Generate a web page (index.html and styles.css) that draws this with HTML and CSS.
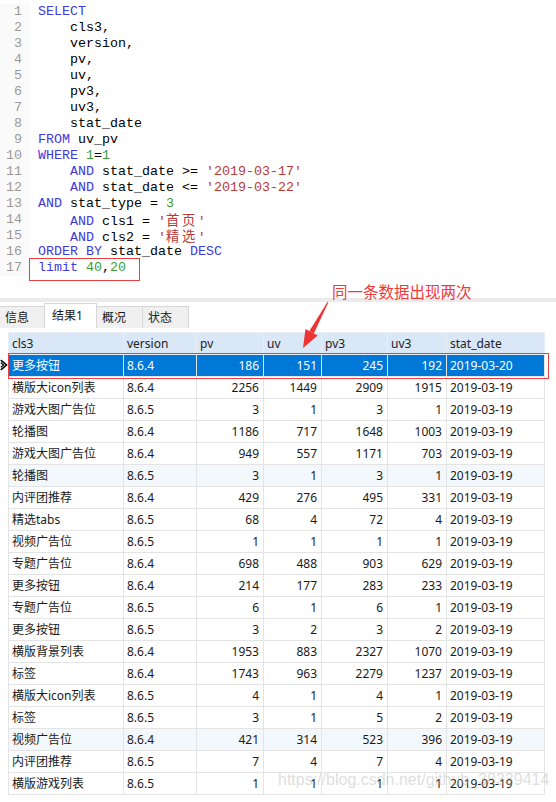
FILE: index.html
```html
<!DOCTYPE html>
<html lang="zh">
<head>
<meta charset="utf-8">
<title>Query result</title>
<link rel="stylesheet" href="styles.css">
</head>
<body>
<div class="page">
  <div class="editor">
    <div class="gutter"><div>1</div><div>2</div><div>3</div><div>4</div><div>5</div><div>6</div><div>7</div><div>8</div><div>9</div><div>10</div><div>11</div><div>12</div><div>13</div><div>14</div><div>15</div><div>16</div><div>17</div></div>
    <div class="code">
      <div class="line"><span class="kw">SELECT</span></div>
      <div class="line">    cls3,</div>
      <div class="line">    version,</div>
      <div class="line">    pv,</div>
      <div class="line">    uv,</div>
      <div class="line">    pv3,</div>
      <div class="line">    uv3,</div>
      <div class="line">    stat_date</div>
      <div class="line"><span class="kw">FROM</span> uv_pv</div>
      <div class="line"><span class="kw">WHERE</span> <span class="num">1</span>=<span class="num">1</span></div>
      <div class="line">    <span class="kw">AND</span> stat_date &gt;= <span class="str">'2019-03-17'</span></div>
      <div class="line">    <span class="kw">AND</span> stat_date &lt;= <span class="str">'2019-03-22'</span></div>
      <div class="line"><span class="kw">AND</span> stat_type = <span class="num">3</span></div>
      <div class="line">    <span class="kw">AND</span> cls1 = <span class="str">'<span class="cjk">首页</span>'</span></div>
      <div class="line">    <span class="kw">AND</span> cls2 = <span class="str">'<span class="cjk">精选</span>'</span></div>
      <div class="line"><span class="kw">ORDER BY</span> stat_date <span class="kw">DESC</span></div>
      <div class="line"><span class="kw">limit</span> <span class="num">40</span>,<span class="num">20</span></div>
    </div>
  </div>
  <div class="split"></div>
  <div class="tabs">
    <div class="tab first">信息</div>
    <div class="tab active">结果1</div>
    <div class="tab">概况</div>
    <div class="tab">状态</div>
  </div>
  <div class="results">
    <table class="grid">
      <colgroup>
        <col class="c-cls"><col class="c-ver"><col class="c-pv"><col class="c-uv"><col class="c-pv3"><col class="c-uv3"><col class="c-date">
      </colgroup>
      <thead>
        <tr><th>cls3</th><th>version</th><th>pv</th><th>uv</th><th>pv3</th><th>uv3</th><th>stat_date</th></tr>
      </thead>
      <tbody>
        <tr class="selected"><td>更多按钮</td><td>8.6.4</td><td class="n">186</td><td class="n">151</td><td class="n">245</td><td class="n">192</td><td>2019-03-20</td></tr>
        <tr><td>横版大icon列表</td><td>8.6.4</td><td class="n">2256</td><td class="n">1449</td><td class="n">2909</td><td class="n">1915</td><td>2019-03-19</td></tr>
        <tr><td>游戏大图广告位</td><td>8.6.5</td><td class="n">3</td><td class="n">1</td><td class="n">3</td><td class="n">1</td><td>2019-03-19</td></tr>
        <tr><td>轮播图</td><td>8.6.4</td><td class="n">1186</td><td class="n">717</td><td class="n">1648</td><td class="n">1003</td><td>2019-03-19</td></tr>
        <tr><td>游戏大图广告位</td><td>8.6.4</td><td class="n">949</td><td class="n">557</td><td class="n">1171</td><td class="n">703</td><td>2019-03-19</td></tr>
        <tr class="tint"><td>轮播图</td><td>8.6.5</td><td class="n">3</td><td class="n">1</td><td class="n">3</td><td class="n">1</td><td>2019-03-19</td></tr>
        <tr><td>内评团推荐</td><td>8.6.4</td><td class="n">429</td><td class="n">276</td><td class="n">495</td><td class="n">331</td><td>2019-03-19</td></tr>
        <tr><td>精选tabs</td><td>8.6.5</td><td class="n">68</td><td class="n">4</td><td class="n">72</td><td class="n">4</td><td>2019-03-19</td></tr>
        <tr><td>视频广告位</td><td>8.6.5</td><td class="n">1</td><td class="n">1</td><td class="n">1</td><td class="n">1</td><td>2019-03-19</td></tr>
        <tr><td>专题广告位</td><td>8.6.4</td><td class="n">698</td><td class="n">488</td><td class="n">903</td><td class="n">629</td><td>2019-03-19</td></tr>
        <tr><td>更多按钮</td><td>8.6.4</td><td class="n">214</td><td class="n">177</td><td class="n">283</td><td class="n">233</td><td>2019-03-19</td></tr>
        <tr><td>专题广告位</td><td>8.6.5</td><td class="n">6</td><td class="n">1</td><td class="n">6</td><td class="n">1</td><td>2019-03-19</td></tr>
        <tr><td>更多按钮</td><td>8.6.5</td><td class="n">3</td><td class="n">2</td><td class="n">3</td><td class="n">2</td><td>2019-03-19</td></tr>
        <tr><td>横版背景列表</td><td>8.6.4</td><td class="n">1953</td><td class="n">883</td><td class="n">2327</td><td class="n">1070</td><td>2019-03-19</td></tr>
        <tr><td>标签</td><td>8.6.4</td><td class="n">1743</td><td class="n">963</td><td class="n">2279</td><td class="n">1237</td><td>2019-03-19</td></tr>
        <tr><td>横版大icon列表</td><td>8.6.5</td><td class="n">4</td><td class="n">1</td><td class="n">4</td><td class="n">1</td><td>2019-03-19</td></tr>
        <tr><td>标签</td><td>8.6.5</td><td class="n">3</td><td class="n">1</td><td class="n">5</td><td class="n">2</td><td>2019-03-19</td></tr>
        <tr class="tint"><td>视频广告位</td><td>8.6.4</td><td class="n">421</td><td class="n">314</td><td class="n">523</td><td class="n">396</td><td>2019-03-19</td></tr>
        <tr><td>内评团推荐</td><td>8.6.5</td><td class="n">7</td><td class="n">4</td><td class="n">7</td><td class="n">4</td><td>2019-03-19</td></tr>
        <tr><td>横版游戏列表</td><td>8.6.5</td><td class="n">1</td><td class="n">1</td><td class="n">1</td><td class="n">1</td><td>2019-03-19</td></tr>
      </tbody>
    </table>
  </div>

  <div class="limit-box"></div>
  <div class="sel-box"></div>
  <svg class="row-marker" width="8" height="12" viewBox="0 0 8 12"><path d="M0.8 1.2 L6.5 6 L0.8 10.8" fill="none" stroke="#000" stroke-width="1.6"/><path d="M0.8 3.8 L3.6 6 L0.8 8.2" fill="none" stroke="#000" stroke-width="1.2"/></svg>
  <div class="note">同一条数据出现两次</div>
  <svg class="arrow" width="40" height="56" viewBox="296 298 40 56">
    <polygon points="328.4,302.2 327.6,301.8 309.4,331.0 313.8,333.4" fill="#ee3333"/>
    <polygon points="303,348 305.5,328.9 317.7,335.5" fill="#ee3333"/>
  </svg>
  <div class="watermark">https://blog.csdn.net/github_38339414</div>
</div>
</body>
</html>
```

FILE: styles.css
```css
html, body {
  margin: 0;
  padding: 0;
  background: #ffffff;
}

.page {
  position: relative;
  width: 556px;
  height: 802px;
  overflow: hidden;
  font-family: "Noto Sans", "Noto Sans CJK SC", sans-serif;
  color: #1a1a1a;
}

/* ---------- SQL editor ---------- */
.editor {
  display: flex;
  align-items: flex-start;
  height: 298px;
  box-sizing: border-box;
  padding-top: 4px;
  font-family: "Liberation Mono", "Noto Sans CJK SC", monospace;
  font-size: 13.33px;
  line-height: 16px;
  color: #000;
}

.gutter {
  width: 30px;
  padding-right: 8px;
  box-sizing: border-box;
  text-align: right;
  color: #9a9a9a;
  background: #fafafa;
}

.code {
  margin-left: 8px;
}

.line {
  height: 16px;
  white-space: pre;
}

.kw { color: #3b3bdc; }
.num { color: #3a9a3a; }
.str { color: #b53a3a; }
.cjk {
  font-family: "Noto Sans CJK SC", sans-serif;
  letter-spacing: 2.6px;
}

.split {
  height: 4px;
  background: #ebebeb;
}

/* ---------- tabs ---------- */
.tabs {
  display: flex;
  align-items: flex-end;
  height: 26px;
  font-size: 12px;
  color: #1a1a1a;
}

.tab {
  height: 22px;
  line-height: 21px;
  box-sizing: border-box;
  width: 47px;
  padding-left: 5px;
  border: 1px solid #d6d6d6;
  border-bottom: none;
  background: #f0f0f0;
  margin-left: -1px;
}

.tab.first {
  width: 46px;
}

.tab.active {
  height: 25px;
  width: 53px;
  line-height: 23px;
  padding-left: 7px;
  background: #ffffff;
}

/* ---------- result grid ---------- */
.results {
  padding: 4px 0 0 8px;
}

.grid {
  border-collapse: collapse;
  table-layout: fixed;
  width: 536px;
  font-size: 12px;
}

.c-cls { width: 115px; }
.c-ver { width: 73px; }
.c-pv { width: 67px; }
.c-uv { width: 58px; }
.c-pv3 { width: 66px; }
.c-uv3 { width: 59px; }
.c-date { width: 98px; }

.grid th,
.grid td {
  height: 21px;
  padding: 0 4px 0 3px;
  border: 1px solid #e4e4e4;
  text-align: left;
  font-weight: normal;
  white-space: nowrap;
  overflow: hidden;
  line-height: 20px;
}

.grid th {
  background: #d9e7f6;
  border-color: #e9eef4;
  color: #222;
}

.grid td.n {
  text-align: right;
}

.grid tr.tint td {
  background: #f3f8fd;
}

.grid tr.selected td {
  background: #0078d7;
  color: #ffffff;
  border-color: #e4e4e4;
}

/* ---------- overlays ---------- */
.limit-box {
  position: absolute;
  left: 29px;
  top: 258px;
  width: 111px;
  height: 23px;
  box-sizing: border-box;
  border: 1px solid #e84040;
}

.sel-box {
  position: absolute;
  left: 8px;
  top: 353px;
  width: 541px;
  height: 26px;
  box-sizing: border-box;
  border: 1px solid #e84040;
}

.row-marker {
  position: absolute;
  left: 0;
  top: 359px;
}

.note {
  position: absolute;
  left: 332px;
  top: 280px;
  font-family: "Noto Sans CJK SC", sans-serif;
  font-size: 15.5px;
  line-height: 22px;
  color: #f03a3a;
}

.arrow {
  position: absolute;
  left: 296px;
  top: 298px;
}

.watermark {
  position: absolute;
  left: 278px;
  top: 771px;
  font-family: "Liberation Sans", sans-serif;
  font-size: 16px;
  color: rgba(170, 170, 170, 0.4);
  white-space: nowrap;
}
```
